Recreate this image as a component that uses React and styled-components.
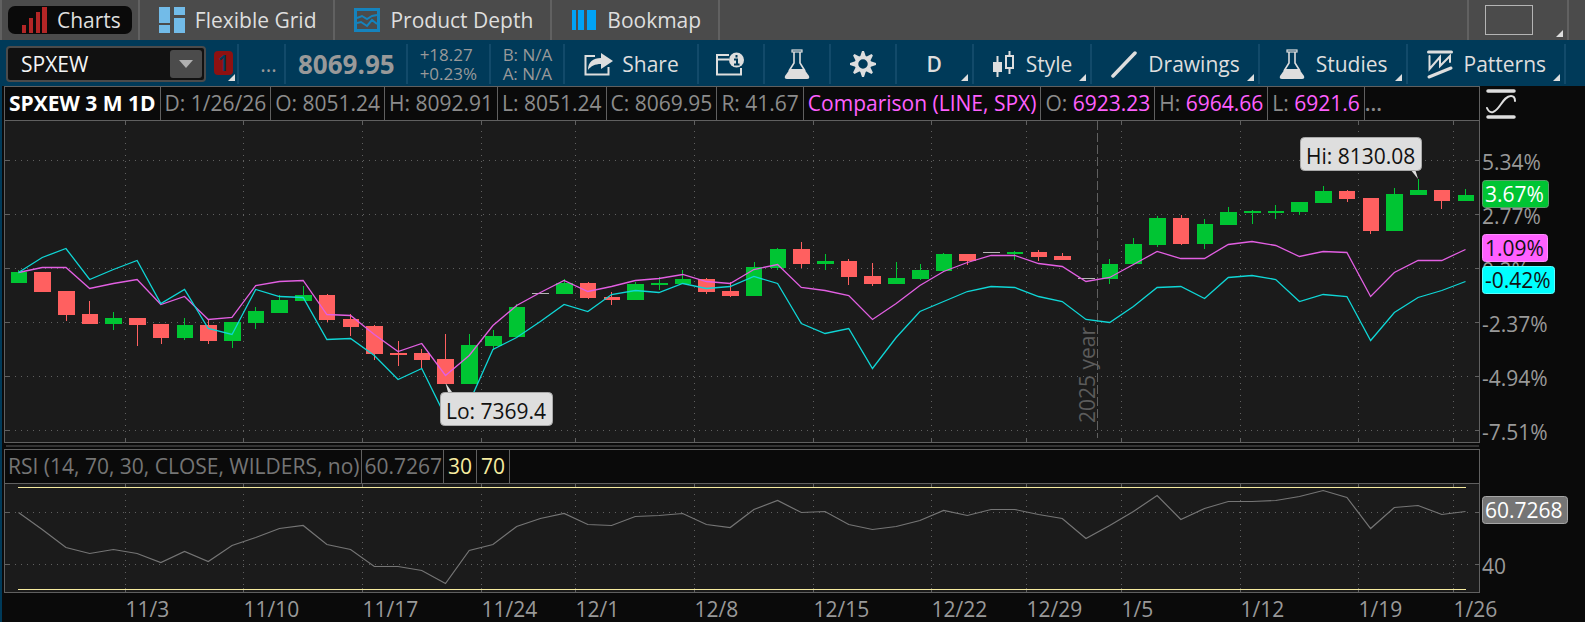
import React from "react";
import styled, { createGlobalStyle, css } from "styled-components";

const GUTTER = 105;
const PRICE_TOP = 120;
const RSI_TOP = 483;

// [bodyTop, bodyBottom, wickTop, wickBottom, kind]
const CANDLES = [
  [272, 283, 270, 283, "up"],
  [272, 292, 272, 292, "down"],
  [291, 315, 291, 321, "down"],
  [314, 324, 301, 324, "down"],
  [318, 324, 312, 330, "up"],
  [318, 325, 318, 346, "down"],
  [324, 338, 324, 344, "down"],
  [325, 338, 318, 340, "up"],
  [325, 341, 319, 344, "down"],
  [322, 341, 322, 348, "up"],
  [311, 323, 307, 329, "up"],
  [300, 313, 295, 313, "up"],
  [295, 301, 286, 301, "up"],
  [295, 320, 294, 322, "down"],
  [319, 327, 314, 336, "down"],
  [326, 354, 325, 360, "down"],
  [353, 355, 341, 366, "down"],
  [353, 360, 349, 368, "down"],
  [359, 384, 334, 384, "down"],
  [345, 384, 334, 384, "up"],
  [336, 346, 330, 350, "up"],
  [307, 337, 304, 337, "up"],
  [293, 294, 293, 294, "flat"],
  [283, 294, 279, 294, "up"],
  [283, 298, 282, 299, "down"],
  [297, 300, 292, 305, "down"],
  [284, 300, 282, 300, "up"],
  [283, 285, 277, 290, "up"],
  [279, 284, 270, 284, "up"],
  [279, 292, 278, 294, "down"],
  [291, 296, 282, 297, "down"],
  [267, 296, 262, 296, "up"],
  [249, 268, 248, 270, "up"],
  [249, 264, 242, 268, "down"],
  [261, 264, 254, 270, "up"],
  [261, 277, 259, 285, "down"],
  [276, 284, 263, 286, "down"],
  [278, 284, 262, 284, "up"],
  [270, 279, 264, 280, "up"],
  [254, 271, 253, 271, "up"],
  [254, 261, 254, 265, "down"],
  [252, 253, 252, 253, "flat"],
  [252, 254, 251, 260, "up"],
  [252, 257, 250, 261, "down"],
  [256, 260, 253, 260, "down"],
  [278, 279, 278, 279, "flat"],
  [264, 279, 259, 284, "up"],
  [244, 264, 238, 264, "up"],
  [218, 245, 216, 247, "up"],
  [218, 244, 215, 245, "down"],
  [224, 244, 219, 249, "up"],
  [212, 225, 207, 225, "up"],
  [211, 213, 210, 224, "up"],
  [211, 213, 205, 219, "up"],
  [202, 212, 202, 215, "up"],
  [191, 203, 186, 203, "up"],
  [191, 199, 190, 202, "down"],
  [198, 231, 198, 234, "down"],
  [194, 231, 188, 231, "up"],
  [190, 195, 179, 195, "up"],
  [190, 201, 190, 209, "down"],
  [195, 201, 189, 201, "up"],
];

const SPX = [
  272, 267, 267, 288, 283, 279, 304, 296, 319, 317, 285, 281, 280, 314, 315,
  334, 351, 343, 375, 355, 325, 305, 292, 280, 291, 286, 280, 278, 274, 281,
  283, 269, 264, 287, 290, 295, 319, 303, 285, 271, 262, 255, 255, 263, 266,
  281, 277, 264, 251, 258, 258, 244, 241, 245, 256, 251, 252, 296, 272, 260,
  260, 249,
];

const CYAN = [
  272, 257, 248, 279, 269, 260, 303, 289, 328, 334, 289, 296, 297, 339, 338,
  355, 379, 368, 416, 402, 349, 337, 321, 304, 311, 294, 290, 292, 283, 288,
  286, 276, 283, 323, 333, 328, 368, 337, 311, 301, 291, 286, 287, 296, 301,
  319, 322, 306, 287, 286, 298, 277, 275, 279, 301, 294, 296, 340, 312, 297,
  290, 281,
];

const RSI = [
  512, 529, 547, 553, 549, 553, 562, 551, 561, 545, 537, 528, 525, 544, 549,
  566, 566, 570, 583, 550, 544, 526, 518, 513, 524, 525, 516, 515, 513, 524,
  527, 509, 500, 512, 511, 524, 529, 526, 520, 510, 515, 509, 509, 514, 518,
  538, 525, 511, 495, 519, 508, 501, 501, 500, 496, 490, 497, 528, 507, 505,
  514, 511,
];

// a week starts half a bar before the given index
const WEEKS = [
  { bar: 5, label: "11/3" },
  { bar: 10, label: "11/10" },
  { bar: 15, label: "11/17" },
  { bar: 20, label: "11/24" },
  { bar: 24, label: "12/1" },
  { bar: 29, label: "12/8" },
  { bar: 34, label: "12/15" },
  { bar: 39, label: "12/22" },
  { bar: 43, label: "12/29" },
  { bar: 47, label: "1/5" },
  { bar: 52, label: "1/12" },
  { bar: 57, label: "1/19" },
  { bar: 61, label: "1/26" },
];

const PRICE_LEVELS = [
  { y: 160, label: "5.34%" },
  { y: 214, label: "2.77%" },
  { y: 268, label: "0.2%" },
  { y: 322, label: "-2.37%" },
  { y: 376, label: "-4.94%" },
  { y: 430, label: "-7.51%" },
];

const COLORS = { up: "#00c533", down: "#ff6060", flat: "#b4b4b4" };

const OHLC = ["D: 1/26/26", "O: 8051.24", "H: 8092.91", "L: 8051.24", "C: 8069.95", "R: 41.67"];

const COMPARISON = [
  ["O:", "6923.23"],
  ["H:", "6964.66"],
  ["L:", "6921.6"],
];

function useWidth() {
  const ref = React.useRef(null);
  const [width, setWidth] = React.useState(0);

  React.useLayoutEffect(() => {
    const measure = () => setWidth(Math.floor(ref.current.clientWidth));
    measure();
    const observer = new ResizeObserver(measure);
    observer.observe(ref.current);
    return () => observer.disconnect();
  }, []);

  return [ref, width];
}

function makeScale(width) {
  const right = width - GUTTER;
  const step = (right - 29) / 61;
  const x = (bar) => 14.5 + bar * step;
  return { right, step, x, week: (bar) => Math.round(x(bar - 0.5) - 0.5) + 0.5 };
}

const toPoints = (values, x, top) =>
  values.map((y, i) => `${x(i)},${y - top + 0.5}`).join(" ");

const Grid = ({ scale, levels, height }) => (
  <g stroke="#606060" shapeRendering="crispEdges">
    {levels.map((y) => (
      <g key={y}>
        <path d={`M11 ${y}H${scale.right - 8}`} strokeDasharray="1 5" />
        <path d={`M1 ${y}h5M${scale.right - 5} ${y}h5`} />
      </g>
    ))}
    {WEEKS.map(({ bar }) => (
      <g key={bar}>
        <path
          d={`M${scale.week(bar)} 11V${height - 8}`}
          strokeDasharray="1 5"
        />
        <path
          d={`M${scale.week(bar)} 0v5M${scale.week(bar)} ${height - 5}v5`}
        />
      </g>
    ))}
  </g>
);

const Candle = ({ x, step, top, bottom, high, low, kind }) => {
  const body = x - 7.5;
  const left = Math.floor(body);

  return (
    <g fill={COLORS[kind]}>
      <rect
        x={left}
        y={top - PRICE_TOP}
        width={Math.floor(body + step * 0.7) - left}
        height={bottom - top}
      />
      <rect
        x={Math.round(x - 0.3)}
        y={high - PRICE_TOP}
        width="1"
        height={low - high}
      />
    </g>
  );
};

const Tag = ({ x, y, width, fill, stroke, color, children }) => (
  <g>
    <rect
      x={x + 0.5}
      y={y + 0.5}
      width={width - 1}
      height="27"
      rx="3"
      fill={fill}
      stroke={stroke}
    />
    <AxisText x={x + 3} y={y + 22} fill={color}>
      {children}
    </AxisText>
  </g>
);

const Callout = ({ x, y, width, pointer, children }) => (
  <g>
    <path d={pointer} fill="#dedede" />
    <rect
      x={x + 0.5}
      y={y + 0.5}
      width={width - 1}
      height="33"
      rx="4"
      fill="#dedede"
      stroke="#a9a9a9"
    />
    <AxisText x={x + 6} y={y + 27} fill="#111">
      {children}
    </AxisText>
  </g>
);

const PriceChart = () => {
  const [ref, width] = useWidth();
  const scale = makeScale(width);
  const { right, step, x } = scale;
  const yearX = Math.floor(x(45.5)) + 0.5;
  const lowX = x(18);
  const highX = x(59);

  return (
    <ChartBox ref={ref}>
      {width > 0 && (
        <svg width={width} height="323" role="img" aria-label="SPXEW price">
          <rect
            x="0.5"
            y="0.5"
            width={right - 1}
            height="322"
            fill="#1b1b1b"
            stroke="#606060"
          />
          <Grid
            scale={scale}
            levels={PRICE_LEVELS.map(({ y }) => y - PRICE_TOP + 0.5)}
            height={323}
          />
          <path
            d={`M${yearX} 1V318`}
            stroke="#606060"
            strokeDasharray="9 3"
            shapeRendering="crispEdges"
          />
          <AxisText
            transform={`translate(${yearX - 3} 303) rotate(-90)`}
            fill="#5c5c5c"
          >
            2025 year
          </AxisText>
          <g shapeRendering="crispEdges">
            {CANDLES.map(([top, bottom, high, low, kind], i) => (
              <Candle
                key={i}
                x={x(i)}
                step={step}
                top={top}
                bottom={bottom}
                high={high}
                low={low}
                kind={kind}
              />
            ))}
          </g>
          <polyline
            points={toPoints(SPX, x, PRICE_TOP)}
            fill="none"
            stroke="#e25fe2"
            strokeWidth="1.3"
          />
          <polyline
            points={toPoints(CYAN, x, PRICE_TOP)}
            fill="none"
            stroke="#0fd6d6"
            strokeWidth="1.3"
          />
          <Callout
            x={Math.round(lowX) - 5}
            y={272}
            width={113}
            pointer={`M${lowX} 263l3 11h5z`}
          >
            Lo: 7369.4
          </Callout>
          <Callout
            x={Math.round(highX) - 118}
            y={17}
            width={122}
            pointer={`M${highX} 59l-8 -10h5z`}
          >
            Hi: 8130.08
          </Callout>
          {PRICE_LEVELS.map(({ y, label }) => (
            <AxisText key={label} x={right + 2} y={y - PRICE_TOP + 10}>
              {label}
            </AxisText>
          ))}
          <Tag x={right + 2} y={60} width={67} fill="#00c533" stroke="#5d9c6c" color="#fff">
            3.67%
          </Tag>
          <Tag x={right + 2} y={114} width={66} fill="#ff60ff" stroke="#ff8cff" color="#111">
            1.09%
          </Tag>
          <Tag x={right + 2} y={146} width={73} fill="#00ffff" stroke="#58ffff" color="#111">
            -0.42%
          </Tag>
        </svg>
      )}
    </ChartBox>
  );
};

const RsiChart = () => {
  const [ref, width] = useWidth();
  const scale = makeScale(width);
  const { right, x } = scale;

  return (
    <ChartBox ref={ref}>
      {width > 0 && (
        <svg width={width} height="139" role="img" aria-label="RSI">
          <rect
            x="0.5"
            y="0.5"
            width={right - 1}
            height="109"
            fill="#1b1b1b"
            stroke="#606060"
          />
          <Grid scale={scale} levels={[29.5, 81.5]} height={110} />
          <path
            d={`M14 4.5H${right - 14}M14 106.5H${right - 14}`}
            stroke="#f7eca0"
            shapeRendering="crispEdges"
          />
          <polyline
            points={toPoints(RSI, x, RSI_TOP)}
            fill="none"
            stroke="#757575"
            strokeWidth="1.2"
          />
          {WEEKS.map(({ bar, label }) => (
            <AxisText key={label} x={scale.week(bar)} y="134">
              {label}
            </AxisText>
          ))}
          <Tag x={right + 2} y={13} width={86} fill="#757575" stroke="#a6a6a6" color="#fff">
            60.7268
          </Tag>
          <AxisText x={right + 2} y="91">
            40
          </AxisText>
        </svg>
      )}
    </ChartBox>
  );
};

const BarsIcon = () => (
  <svg width="25" height="26" fill="#b32626">
    <path d="M0 18h4v8H0zM7 11h4v15H7zM14 5h4v21h-4zM20 0h5v26h-5z" />
  </svg>
);

const GridIcon = () => (
  <svg width="26" height="26" fill="#72bbe8">
    <path d="M0 0h11v16H0zM0 18h11v8H0zM15 0h11v8H15zM15 11h11v15H15z" />
  </svg>
);

const DepthIcon = () => (
  <svg width="26" height="24" fill="none" stroke="#1583bd">
    <rect x="1.5" y="1.5" width="23" height="21" strokeWidth="3" />
    <path d="M3 10l5-2 5 3 5-3 5-1M3 15l4-1 6 4 5-6 5 4" strokeWidth="2" />
  </svg>
);

const BookmapIcon = () => (
  <svg width="26" height="20" fill="#00a3f5">
    <path d="M1 0h4v20H1zM7 0h6v20H7zM16 0h9v20h-9z" />
  </svg>
);

const ShareIcon = () => (
  <svg width="29" height="24" fill="none">
    <path d="M11 4H1.5v18.5h23V15" stroke="#dedede" strokeWidth="2" />
    <path d="M17 1l12 8-12 8v-5c-6 0-10 2-13 6 0-8 5-12 13-12z" fill="#dedede" />
  </svg>
);

const InfoIcon = () => (
  <svg width="29" height="24" fill="none">
    <path d="M13 3H1v19.5h24V16M2 7.5h11" stroke="#dedede" strokeWidth="2" />
    <circle cx="20.5" cy="8" r="7.5" fill="#dedede" />
    <path
      d="M20.5 3v2.5M18 7.5h3v5M18 12.500h5.5"
      stroke="#003a59"
      strokeWidth="2"
    />
  </svg>
);

const FlaskIcon = () => (
  <svg width="26" height="30" fill="none" stroke="#dedede">
    <rect x="8" y="1" width="10" height="2" strokeWidth="1.2" />
    <path d="M10 3v11L5 22M16 3v11l5 8" strokeWidth="1.6" />
    <path d="M6 20h14l5 7q1 3-2 3H3q-3 0-2-3z" fill="#dedede" stroke="none" />
  </svg>
);

const GearIcon = () => (
  <svg width="26" height="26" viewBox="-13 -13 26 26" fill="#dedede">
    {[0, 45, 90, 135, 180, 225, 270, 315].map((angle) => (
      <path key={angle} d="M-3 -7L-1 -13H1L3 -7z" transform={`rotate(${angle})`} />
    ))}
    <circle r="6.5" fill="none" stroke="#dedede" strokeWidth="3.5" />
  </svg>
);

const CandlesIcon = () => (
  <svg width="22" height="26" fill="none" stroke="#dedede" strokeWidth="2">
    <path d="M4.5 5v21M16.5 0v5M16.5 18v5" />
    <rect x="0" y="11" width="9" height="10" fill="#dedede" stroke="none" />
    <rect x="13" y="5" width="7" height="12" />
  </svg>
);

const LineIcon = () => (
  <svg width="26" height="27">
    <path d="M2 25L24 2" stroke="#dedede" strokeWidth="3.5" strokeLinecap="round" />
  </svg>
);

const PatternIcon = () => (
  <svg width="26" height="29" fill="none" stroke="#dedede" strokeLinecap="round">
    <path d="M1.5 2h23M2 27l22-9" strokeWidth="3" />
    <path d="M2.5 6v13L13 7v9l10-10v6" strokeWidth="2" />
  </svg>
);

const WaveIcon = () => (
  <svg width="30" height="30" fill="none" stroke="#dedede" strokeLinecap="round">
    <path d="M2 2h26M2 28h26" strokeWidth="3.5" />
    <path d="M1 19q2 5 6 4c7-2 10-16 18-16q4 0 4 5" strokeWidth="2" />
  </svg>
);

const TABS = [
  { label: "Flexible Grid", Icon: GridIcon },
  { label: "Product Depth", Icon: DepthIcon },
  { label: "Bookmap", Icon: BookmapIcon },
];

const MENUS = [
  { label: "Style", Icon: CandlesIcon },
  { label: "Drawings", Icon: LineIcon },
  { label: "Studies", Icon: FlaskIcon },
  { label: "Patterns", Icon: PatternIcon },
];

export default function App() {
  const [symbol, setSymbol] = React.useState("SPXEW");

  return (
    <Page>
      <GlobalStyle />
      <TabBar>
        <Tab>
          <ActiveTab>
            <BarsIcon />
            Charts
          </ActiveTab>
        </Tab>
        {TABS.map(({ label, Icon }) => (
          <Tab key={label}>
            <TabButton>
              <Icon />
              {label}
            </TabButton>
          </Tab>
        ))}
        <Spacer />
        <LayoutButton aria-label="Grid layout">
          <LayoutPreview />
        </LayoutButton>
      </TabBar>

      <Toolbar>
        <SymbolCell>
          <SymbolBox>
            <SymbolInput
              aria-label="Symbol"
              value={symbol}
              onChange={(event) => setSymbol(event.target.value)}
            />
            <DropButton aria-label="Recent symbols">
              <svg width="14" height="8" fill="#b0b0b0">
                <path d="M0 0h14L7 8z" />
              </svg>
            </DropButton>
          </SymbolBox>
          <LinkButton aria-label="Link color 1">1</LinkButton>
        </SymbolCell>
        <MoreButton aria-label="Company">...</MoreButton>
        <Quote>
          <LastPrice>8069.95</LastPrice>
        </Quote>
        <Quote $width={83}>
          <span>+18.27</span>
          <span>+0.23%</span>
        </Quote>
        <Quote>
          <span>B: N/A</span>
          <span>A: N/A</span>
        </Quote>
        <ToolButton>
          <ShareIcon />
          Share
        </ToolButton>
        <ToolButton $square aria-label="Event info">
          <InfoIcon />
        </ToolButton>
        <ToolButton $square aria-label="Edit studies">
          <FlaskIcon />
        </ToolButton>
        <ToolButton $square aria-label="Chart settings">
          <GearIcon />
        </ToolButton>
        <TimeframeButton $menu>D</TimeframeButton>
        {MENUS.map(({ label, Icon }) => (
          <ToolButton key={label} $menu>
            <Icon />
            {label}
          </ToolButton>
        ))}
      </Toolbar>

      <Workspace>
        <HeaderRow>
          <Header>
            <Cell $strong>SPXEW 3 M 1D</Cell>
            {OHLC.map((text) => (
              <Cell key={text}>{text}</Cell>
            ))}
            <Cell $color="#ff60ff">Comparison (LINE, SPX)</Cell>
            {COMPARISON.map(([name, value]) => (
              <Cell key={name}>
                {name} <Pink>{value}</Pink>
              </Cell>
            ))}
            <Ellipsis>...</Ellipsis>
          </Header>
          <HeaderGutter>
            <IconButton aria-label="Auto scale">
              <WaveIcon />
            </IconButton>
          </HeaderGutter>
        </HeaderRow>
        <PriceChart />
        <Splitter />
        <HeaderRow>
          <Header>
            <Cell $tight $color="#757575">
              RSI (14, 70, 30, CLOSE, WILDERS, no)
            </Cell>
            <Cell $tight $color="#757575">
              60.7267
            </Cell>
            <Cell $color="#f7eca0">30</Cell>
            <Cell $color="#f7eca0">70</Cell>
          </Header>
          <HeaderGutter />
        </HeaderRow>
        <RsiChart />
      </Workspace>
    </Page>
  );
}

const GlobalStyle = createGlobalStyle`
  * {
    box-sizing: border-box;
  }

  body {
    margin: 0;
    background: #0a0a0a;
    font-family: "Open Sans", "Noto Sans", sans-serif;
    font-size: 21px;
    color: #dedede;
  }

  button,
  input {
    margin: 0;
    padding: 0;
    border: none;
    background: none;
    color: inherit;
    font: inherit;
  }

  button {
    cursor: pointer;
  }

  svg {
    display: block;
    flex-shrink: 0;
  }
`;

const Page = styled.div`
  display: flex;
  flex-direction: column;
  min-height: 100vh;
  overflow: hidden;
  white-space: nowrap;
`;

const corner = css`
  position: relative;

  &::after {
    content: "";
    position: absolute;
    right: 4px;
    bottom: 3px;
    border-left: 7px solid transparent;
    border-bottom: 7px solid #dedede;
  }
`;

const TabBar = styled.nav`
  display: flex;
  height: 40px;
  padding-right: 16px;
  background: #4b4b4b;
  border-left: 2px solid #616161;
`;

const Tab = styled.div`
  display: flex;
  align-items: center;
  border-right: 2px solid #616161;
`;

const ActiveTab = styled.button`
  display: flex;
  align-items: center;
  gap: 10px;
  height: 28px;
  margin: 0 6px;
  padding: 0 11px 0 14px;
  border-radius: 7px;
  background: #0a0a0a;
`;

const TabButton = styled.button`
  display: flex;
  align-items: center;
  gap: 10px;
  height: 40px;
  padding: 0 17px 0 19px;
`;

const Spacer = styled.div`
  flex: 1;
`;

const LayoutButton = styled.button`
  ${corner}
  display: flex;
  align-items: center;
  width: 102px;
  padding-left: 16px;
  border-left: 2px solid #616161;
  border-right: 2px solid #616161;
`;

const LayoutPreview = styled.span`
  width: 48px;
  height: 30px;
  border: 1px solid #b4b4b4;
`;

const Toolbar = styled.div`
  display: flex;
  height: 46px;
  padding: 4px 0 2px 6px;
  background: #003a59;
`;

const divider = css`
  border-right: 2px solid #124a6a;
`;

const SymbolCell = styled.div`
  ${divider}
  display: flex;
  align-items: center;
  gap: 8px;
  padding-right: 4px;
`;

const SymbolBox = styled.div`
  display: flex;
  align-items: center;
  width: 200px;
  height: 36px;
  padding-right: 2px;
  border: 2px solid #4b4b4b;
  border-radius: 4px;
  background: #111;
`;

const SymbolInput = styled.input`
  flex: 1;
  min-width: 0;
  padding-left: 13px;
  outline: none;
  color: #f4f4f4;
`;

const DropButton = styled.button`
  display: flex;
  align-items: center;
  justify-content: center;
  width: 32px;
  height: 28px;
  border-radius: 3px;
  background: #4b4b4b;
`;

const LinkButton = styled.button`
  position: relative;
  width: 19px;
  height: 24px;
  margin-bottom: 2px;
  border-radius: 4px;
  background: #8e1111;
  color: #003a59;
  font-weight: 600;
  line-height: 24px;

  &::after {
    content: "";
    position: absolute;
    right: -2px;
    bottom: -6px;
    border-left: 7px solid transparent;
    border-bottom: 7px solid #dedede;
  }
`;

const MoreButton = styled.button`
  ${divider}
  width: 47px;
  padding-left: 14px;
  color: #999;
`;

const Quote = styled.div`
  ${divider}
  display: flex;
  flex-direction: column;
  justify-content: center;
  width: ${({ $width }) => ($width ? `${$width}px` : "auto")};
  padding: 0 11px 0 12px;
  color: #999;
  font-size: 17px;
  line-height: 19px;
`;

const LastPrice = styled.strong`
  font-size: 26px;
`;

const ToolButton = styled.button`
  ${divider}
  ${({ $menu }) => $menu && corner}
  display: flex;
  align-items: center;
  justify-content: center;
  gap: ${({ $menu }) => ($menu ? "11px" : "9px")};
  width: ${({ $square }) => ($square ? "66px" : "auto")};
  padding: ${({ $square }) => ($square ? "0" : "0 18px 0 19px")};
`;

const TimeframeButton = styled(ToolButton)`
  width: 77px;
  padding: 0;
  font-weight: 600;
`;

const Workspace = styled.main`
  flex: 1;
  padding-left: 2px;
  border-left: 2px solid #003a59;
`;

const HeaderRow = styled.div`
  display: flex;
  height: 34px;
`;

const Header = styled.div`
  display: flex;
  flex: 1;
  min-width: 0;
  overflow: hidden;
  border: 1px solid #606060;
  border-bottom: none;
`;

const HeaderGutter = styled.div`
  width: ${GUTTER}px;
  padding: 3px 6px;
`;

const Cell = styled.div`
  padding: ${({ $tight }) => ($tight ? "0 1px 0 3px" : "0 4px")};
  border-right: 1px solid #606060;
  color: ${({ $color, $strong }) => $color || ($strong ? "#fff" : "#8c8c8c")};
  font-weight: ${({ $strong }) => ($strong ? 700 : 400)};
  line-height: 32px;
`;

const Pink = styled.span`
  color: #ff60ff;
`;

const Ellipsis = styled.span`
  color: #8c8c8c;
  font-weight: 600;
  line-height: 32px;
`;

const IconButton = styled.button`
  display: block;
`;

const ChartBox = styled.div`
  width: 100%;

  svg {
    overflow: visible;
  }
`;

const Splitter = styled.div`
  height: 2px;
  margin: 2px ${GUTTER + 1}px 2px 2px;
  background: #333;
`;

const AxisText = styled.text`
  font-size: 21px;
  fill: ${({ fill }) => fill || "#999"};
`;
